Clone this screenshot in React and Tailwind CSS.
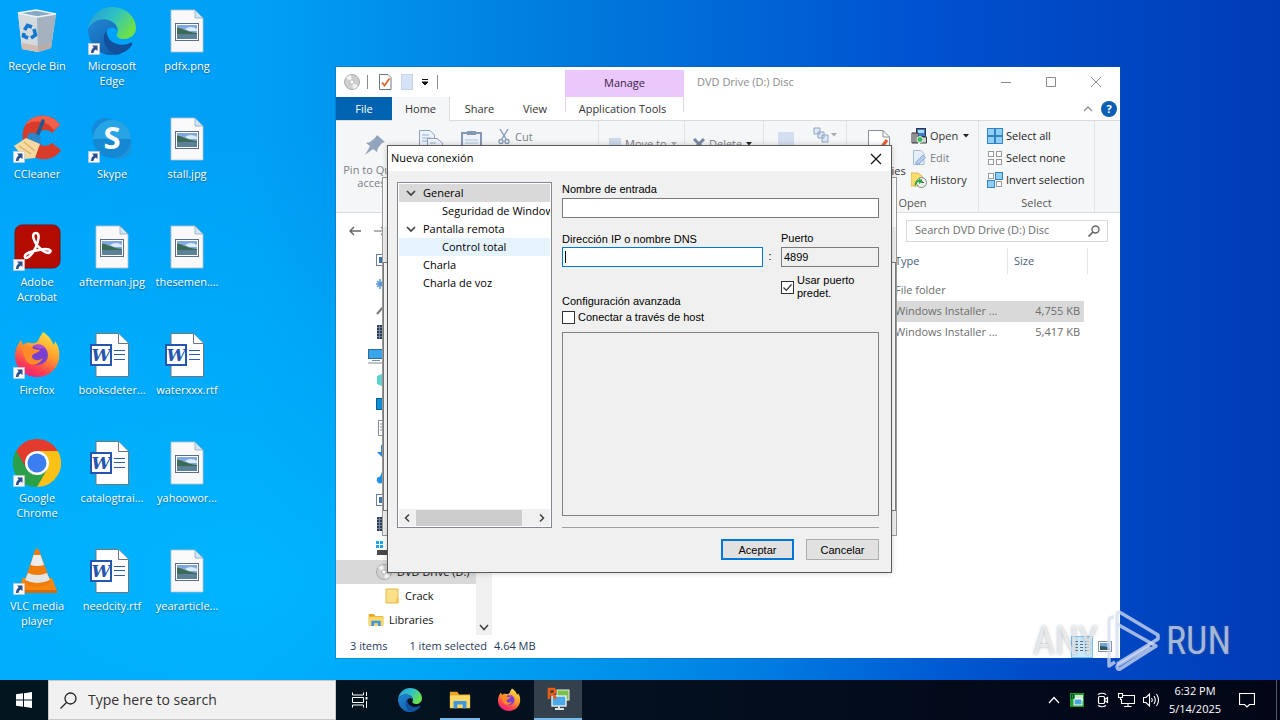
import { useState } from "react";

function ShortcutArrow() {
  return (
    <svg viewBox="0 0 12 12" className="absolute bottom-0 left-0 size-3">
      <rect x="0.5" y="0.5" width="11" height="11" fill="#f8f8fa" stroke="#c9ccd4" strokeWidth="0.6" />
      <path d="M4 2.500H9.500V8L7.800 6.400C6.300 7.300 5.600 8.400 5.400 10H3C3 7.600 4 5.700 5.700 4.300Z" fill="#2b4e8c" />
    </svg>
  );
}

function RecycleBin() {
  return (
    <svg viewBox="0 0 48 48" className="size-12">
      <path d="M5 6 23 3 43 7 38 41 25 45 9 42Z" fill="#cfd8df" />
      <path d="M5 6 24 10 25 45 9 42Z" fill="#d3dade" />
      <path d="M24 10 43 7 38 41 25 45Z" fill="#a3b2be" />
      <path d="M5 6 23 3 43 7 24 10Z" fill="#86a9c2" stroke="#eef3f5" strokeWidth="1.600" />
      <path d="M9 36 25 39 38.500 36 38 41 25 45 9 42Z" fill="#cfa995" opacity="0.6" />
      <g fill="none" stroke="#1677cf" strokeWidth="3.600">
        <path d="M11.500 23 14.500 18.500 19 20" />
        <path d="M21 22 22.500 28 18 31" />
        <path d="M15 31 10.500 29 11 26" />
      </g>
    </svg>
  );
}

function EdgeIcon({ className }) {
  return (
    <svg viewBox="0 0 48 48" className={className}>
      <defs>
        <linearGradient id="edgeTop" x1="0" y1="0" x2="1" y2="0.5">
          <stop offset="0" stopColor="#2596dd" />
          <stop offset="0.55" stopColor="#2fc2c4" />
          <stop offset="1" stopColor="#6be04c" />
        </linearGradient>
        <linearGradient id="edgeLow" x1="0" y1="0" x2="0.6" y2="1">
          <stop offset="0" stopColor="#2389d6" />
          <stop offset="1" stopColor="#1160ad" />
        </linearGradient>
      </defs>
      <path d="M0 22C2 9 12 0 24 0C38 0 48 10 48 21C48 28 42 32 36 32C31 32 28 30 29 27C31 24 30 18 24 15C16 11 5 13 0 22Z" fill="url(#edgeTop)" />
      <path d="M0 22C5 13 14 11 20 13C27 15 30 20 29 24C28 20 23 19 19 23C12 31 18 43 29 48C13 51 0 38 0 22Z" fill="url(#edgeLow)" />
      <path d="M19 23C12 31 17 44 29 48C35 46 41 43 44 38C45 36 44 35 42 36C34 40 23 37 20 30C19 27 18 25 19 23Z" fill="#124f9c" />
    </svg>
  );
}

function CCleanerIcon() {
  return (
    <svg viewBox="0 0 48 48" className="size-12">
      <path d="M47 10C42 2 33 0 26 1C14 3 8 13 10 25C12 38 23 46 34 44C40 43 45 40 48 35L39 28C34 33 25 31 24 24C23 16 33 12 39 18Z" fill="#d93b2b" />
      <path d="M47 10C42 2 33 0 26 1C20 2 15 5 12 10C22 4 34 6 41 15Z" fill="#f0604a" />
      <path d="M30 6 24 21" stroke="#23598f" strokeWidth="3.600" strokeLinecap="round" />
      <path d="M16 18Q23 17 28 23L27 30 13 25Z" fill="#2d86c8" />
      <path d="M13 23 27 29 22 43 12 44 1 31Z" fill="#f6d9a0" />
      <path d="M6 31 18 39M11 27 22 36" stroke="#dcb268" strokeWidth="1.400" />
    </svg>
  );
}

function SkypeIcon() {
  return (
    <svg viewBox="0 0 48 48" className="size-12">
      <circle cx="17" cy="16" r="13" fill="#1489d8" />
      <circle cx="31" cy="31" r="13" fill="#1a94dc" />
      <circle cx="24" cy="24" r="19" fill="#1488d2" />
      <path d="M5 24A19 19 0 0 1 43 24Z" fill="#27a4e6" />
      <text x="24" y="34" textAnchor="middle" fontSize="31" fontWeight="700" fontFamily="Open Sans, sans-serif" fill="#fff">S</text>
    </svg>
  );
}

function AcrobatIcon() {
  return (
    <svg viewBox="0 0 48 48" className="size-12">
      <rect x="2" y="2" width="45" height="43" rx="7" fill="#b30b00" stroke="#7b1512" />
      <path d="M23 10C27 10 26 18 22 26C18 33 13 37 12 34C11 31 18 28 26 27C35 25 39 27 37 29C34 32 26 26 22 19C19 13 20 10 23 10Z" fill="none" stroke="#fff" strokeWidth="2.600" />
    </svg>
  );
}

function FirefoxIcon({ className }) {
  return (
    <svg viewBox="0 0 48 48" className={className}>
      <defs>
        <linearGradient id="fox" x1="0.8" y1="0" x2="0.3" y2="1">
          <stop offset="0" stopColor="#ffe646" />
          <stop offset="0.45" stopColor="#ff9a2c" />
          <stop offset="0.8" stopColor="#ff3b55" />
          <stop offset="1" stopColor="#e32287" />
        </linearGradient>
      </defs>
      <path d="M30 1C36 5 40 10 40 14C42 12 42 10 42 10C46 16 47 21 46 28C44 39 35 46 24 46C12 46 2 37 2 25C2 18 5 13 8 9L10 14C13 11 16 11 18 12C22 13 25 11 26 8C27 5 29 3 30 1Z" fill="url(#fox)" />
      <circle cx="25" cy="24" r="10" fill="#7a3fd0" />
      <path d="M8 16C13 13 18 15 21 18L27 19C26 22 20 22 19 25C19 29 25 31 30 27C26 36 14 35 12 27Z" fill="#ff8a2a" />
      <path d="M20 15C24 12 31 13 34 19C31 17 29 17 27 18Z" fill="#b04fc9" />
    </svg>
  );
}

function ChromeIcon() {
  return (
    <svg viewBox="0 0 48 48" className="size-12">
      <path d="M24 24 3.200 12A24 24 0 0 1 44.800 12Z" fill="#e33b2e" />
      <path d="M24 24 44.800 12A24 24 0 0 1 24 48Z" fill="#fbc116" />
      <path d="M24 24 24 48A24 24 0 0 1 3.200 12Z" fill="#2aa04a" />
      <path d="M24 12H44.800L34.500 30Z" fill="#fbc116" />
      <path d="M13.600 30 3.200 12 24 12Z" fill="#e33b2e" />
      <path d="M3.200 12 13.600 30 24 36 34.400 30 24 48A24 24 0 0 1 3.200 12Z" fill="#2aa04a" />
      <circle cx="24" cy="24" r="12" fill="#fff" />
      <circle cx="24" cy="24" r="9.500" fill="#3c7df0" />
    </svg>
  );
}

function VlcIcon() {
  return (
    <svg viewBox="0 0 48 48" className="size-12">
      <path d="M10 31H39L44 44H4Z" fill="#f5870f" />
      <path d="M4 43H44V46H4Z" fill="#d96b06" />
      <path d="M22 3Q24 0 26 3L38 36Q24 44 11 36Z" fill="#f07c0c" />
      <path d="M20.500 8H27.500L31 18Q24 20 17.500 18Z" fill="#ececec" />
      <path d="M15 26Q24 30 34 26L37 33Q24 39 12 33Z" fill="#e4e4e4" />
    </svg>
  );
}

function ImageFileIcon() {
  return (
    <svg viewBox="0 0 48 48" className="size-12">
      <path d="M8 3H32L40 11V45H8Z" fill="#f9f9f9" stroke="#b9c2c9" strokeWidth="0.8" />
      <path d="M32 3V11H40Z" fill="#cfe6f8" stroke="#8fa9bd" strokeWidth="0.8" />
      <rect x="12.500" y="16.500" width="23" height="17" fill="#fff" stroke="#5c6f86" />
      <rect x="14" y="18" width="20" height="14" fill="#7fa9dd" />
      <path d="M14 21C18 20 22 25 34 26V28H14Z" fill="#3c6a52" />
      <rect x="14" y="27" width="20" height="5" fill="#5a8199" />
      <path d="M22 22Q28 18 34 22V24H26Z" fill="#dcebf8" />
    </svg>
  );
}

function WordFileIcon() {
  return (
    <svg viewBox="0 0 48 48" className="size-12">
      <path d="M8 2.500H30.500L40.500 12.500V45.500H8Z" fill="#fff" stroke="#70767d" />
      <path d="M30.500 2.500V12.500H40.500" fill="#fff" stroke="#70767d" />
      <path d="M26 19.500H37M26 23.500H37M26 28.500H37" stroke="#2a5db0" />
      <rect x="3" y="14" width="20" height="20" fill="#fff" stroke="#2456b0" strokeWidth="2" />
      <text x="13" y="30" textAnchor="middle" fontSize="17" fontWeight="700" fontStyle="italic" fontFamily="DejaVu Serif, serif" fill="#2456b0">W</text>
    </svg>
  );
}

const desktopItems = [
  { name: "Recycle Bin", icon: <RecycleBin /> },
  { name: "Microsoft Edge", icon: <EdgeIcon className="size-12" />, shortcut: true },
  { name: "pdfx.png", icon: <ImageFileIcon /> },
  { name: "CCleaner", icon: <CCleanerIcon />, shortcut: true },
  { name: "Skype", icon: <SkypeIcon />, shortcut: true },
  { name: "stall.jpg", icon: <ImageFileIcon /> },
  { name: "Adobe Acrobat", icon: <AcrobatIcon />, shortcut: true },
  { name: "afterman.jpg", icon: <ImageFileIcon /> },
  { name: "thesemen....", icon: <ImageFileIcon /> },
  { name: "Firefox", icon: <FirefoxIcon className="size-12" />, shortcut: true },
  { name: "booksdeter...", icon: <WordFileIcon /> },
  { name: "waterxxx.rtf", icon: <WordFileIcon /> },
  { name: "Google Chrome", icon: <ChromeIcon />, shortcut: true },
  { name: "catalogtrai...", icon: <WordFileIcon /> },
  { name: "yahoowor...", icon: <ImageFileIcon /> },
  { name: "VLC media player", icon: <VlcIcon />, shortcut: true },
  { name: "needcity.rtf", icon: <WordFileIcon /> },
  { name: "yeararticle...", icon: <ImageFileIcon /> },
];

function Desktop() {
  return (
    <div className="grid w-fit grid-cols-[repeat(3,75px)] auto-rows-[108px] pt-[7px]">
      {desktopItems.map((item) => (
        <button key={item.name} type="button" className="flex flex-col items-center pr-px text-[11px] leading-[15px] text-white">
          <span className="relative size-12">
            {item.icon}
            {item.shortcut && <ShortcutArrow />}
          </span>
          <span className="mt-[3px] w-[72px] text-center [text-shadow:0_1px_2px_rgba(0,0,0,0.45)]">{item.name}</span>
        </button>
      ))}
    </div>
  );
}

function Disc({ className }) {
  return (
    <svg viewBox="0 0 16 16" className={className}>
      <circle cx="8" cy="8" r="7.500" fill="#cfcfcf" stroke="#9c9c9c" strokeWidth="0.8" />
      <path d="M8 8 2 4A7 7 0 0 1 7 1ZM8 8 14 12A7 7 0 0 1 9 15Z" fill="#f3f3f3" />
      <circle cx="8" cy="8" r="2.200" fill="#fff" stroke="#a8a8a8" strokeWidth="0.8" />
    </svg>
  );
}

function FolderIcon({ className }) {
  return (
    <svg viewBox="0 0 24 20" className={className}>
      <path d="M1 1H9L11 4H23V18H1Z" fill="#e8a825" />
      <path d="M1 5H23V19H1Z" fill="#fbd768" />
      <path d="M5 19V11H19V19H15V15H9V19Z" fill="#3f97dd" />
    </svg>
  );
}

function CheckDoc({ className }) {
  return (
    <svg viewBox="0 0 16 18" className={className}>
      <path d="M2.500 1.500H11L14 4.500V16.500H2.500Z" fill="#fff" stroke="#6d7680" />
      <path d="M5 9.500 7.500 12.500 12.500 5.500" fill="none" stroke="#e0622b" strokeWidth="1.800" />
    </svg>
  );
}

// large version on the ribbon
function PropertiesIcon() {
  return (
    <svg viewBox="0 0 24 32" className="mt-1 h-8 w-6">
      <path d="M1.500 1.500H16L22.500 8V31H1.500Z" fill="#fff" stroke="#8a8f95" />
      <path d="M16 1.500V8H22.500" fill="none" stroke="#8a8f95" />
      <path d="M7 18 11 23 20 11" fill="none" stroke="#e0622b" strokeWidth="3" />
    </svg>
  );
}

function Caret({ className = "text-[#222]" }) {
  return (
    <svg viewBox="0 0 6 4" className={`h-1 w-1.5 ${className}`}>
      <path d="M0 0H6L3 3.500Z" fill="currentColor" />
    </svg>
  );
}

function ExplorerTitle() {
  return (
    <div className="flex h-[30px] shrink-0">
      <div className="flex w-[229px] items-center pl-2">
        <Disc className="size-4" />
        <span className="ml-[7px] h-3.5 w-px bg-[#8a8a8a]" />
        <CheckDoc className="ml-[9px] h-[18px] w-4" />
        <span className="ml-2 h-4 w-3 border border-[#c3d2ea] bg-[#d6e2f5]" />
        <svg viewBox="0 0 8 8" className="ml-2 size-2">
          <path d="M1 1.500H7M1 4H7L4 7Z" stroke="#111" fill="#111" />
        </svg>
        <span className="ml-2 h-3.5 w-px bg-[#8a8a8a]" />
      </div>
      <div className="mt-[3px] flex w-[119px] items-center justify-center bg-[#e9c8fb] text-[#3b2147]">Manage</div>
      <div className="flex-1 pt-[7px] pl-[13px] leading-4 text-[#8b8b8b]">DVD Drive (D:) Disc</div>
      <div className="flex items-center pr-px text-[#8a8a8a]">
        <button type="button" aria-label="Minimize" className="flex w-[45px] justify-center">
          <svg viewBox="0 0 12 12" className="size-3"><path d="M1 6.500H11" stroke="currentColor" /></svg>
        </button>
        <button type="button" aria-label="Maximize" className="flex w-[45px] justify-center">
          <svg viewBox="0 0 12 12" className="size-3"><path d="M1.500 1.500H10.500V10.500H1.500Z" fill="none" stroke="currentColor" /></svg>
        </button>
        <button type="button" aria-label="Close" className="flex w-[46px] justify-center">
          <svg viewBox="0 0 12 12" className="size-3"><path d="M1 1 11 11M11 1 1 11" stroke="currentColor" /></svg>
        </button>
      </div>
    </div>
  );
}

function RibbonTabs() {
  return (
    <div className="flex h-6 shrink-0 border-b border-[#dadbdc] text-[#333]">
      <button type="button" className="w-14 bg-[#0063b1] pt-0.5 text-white">File</button>
      <button type="button" className="-mb-px w-[58px] border-r border-[#dadbdc] bg-[#f5f6f7]">Home</button>
      <button type="button" className="w-[59px] pt-0.5">Share</button>
      <button type="button" className="mr-1 w-[52px] pt-0.5">View</button>
      <button type="button" className="mb-2 w-[119px] border-x border-[#e3d3ea] pr-1">
        <span className="block h-4 pt-1">Application Tools</span>
      </button>
      <div className="flex flex-1 items-center justify-end gap-2 pr-[3px]">
        <svg viewBox="0 0 10 6" className="h-1.5 w-2.5"><path d="M1 5 5 1 9 5" fill="none" stroke="#8d8d8d" strokeWidth="1.300" /></svg>
        <button type="button" aria-label="Help" className="size-4 rounded-full bg-[#0b5fb4] text-[11px] leading-4 font-bold text-white">?</button>
      </div>
    </div>
  );
}

function SelectIcon({ type }) {
  const on = { all: [1, 1, 1, 1], none: [0, 0, 0, 0], invert: [0, 1, 1, 0] }[type];
  const spots = [[1, 1], [9, 1], [1, 9], [9, 9]];
  return (
    <svg viewBox="0 0 16 16" className="size-4">
      {spots.map(([x, y], i) => (
        <rect
          key={i}
          x={on[i] ? x - 0.5 : x + 0.5}
          y={on[i] ? y - 0.5 : y + 0.5}
          width={on[i] ? 7 : 5}
          height={on[i] ? 7 : 5}
          fill={on[i] ? "#8fd0fa" : "#fff"}
          stroke={on[i] ? "#3583bd" : "#9a9a9a"}
        />
      ))}
    </svg>
  );
}

function OpenIcon() {
  return (
    <svg viewBox="0 0 16 16" className="size-4">
      <rect x="5.500" y="0.500" width="9" height="8" fill="#3f78c9" stroke="#2c3747" />
      <rect x="7" y="2" width="6" height="3" fill="#a6dcf5" />
      <path d="M11 9H15.500V15H9" fill="#cfd3d6" stroke="#3d3d3d" />
      <path d="M1 5H7V15H1Z" fill="#f0f0f0" stroke="#333" />
      <path d="M3 5V15M5 5V15" stroke="#333" />
      <circle cx="9" cy="11.500" r="3" fill="#3cba5d" stroke="#dff7df" />
    </svg>
  );
}

function EditIcon() {
  return (
    <svg viewBox="0 0 16 16" className="size-4">
      <path d="M2.500 0.500H10L13 3.500V14.500H2.500Z" fill="#e6eef9" stroke="#a8b9d2" />
      <path d="M5 12 12 5 14.500 7.500 8 14H5Z" fill="#b7cdec" stroke="#8eabd4" />
    </svg>
  );
}

function HistoryIcon() {
  return (
    <svg viewBox="0 0 16 16" className="size-4">
      <path d="M0 1H7L11 4V14H0Z" fill="#fbdc6c" stroke="#dcae3c" strokeWidth="0.8" />
      <circle cx="10.500" cy="10.500" r="5" fill="#e9f3e8" stroke="#7f8b86" />
      <path d="M10.500 7.500V10.500H13" fill="none" stroke="#4b5450" />
      <path d="M4 15C3 10 5 8 8 8L8 6 12 9.500 8 12V10C6 10 5 12 4 15Z" fill="#37a647" />
    </svg>
  );
}

function Ribbon() {
  return (
    <div className="flex h-[92px] shrink-0 border-b border-[#dadbdc] bg-[#f5f6f7] text-[#7b7f86]">
      <div className="flex w-[263px] items-start border-r border-[#e2e3e4] pt-2">
        <button type="button" className="ml-1.5 flex w-16 flex-col items-center leading-[13px]">
          <svg viewBox="0 0 24 24" className="mt-1 mb-1.5 size-6">
            <path d="M15 2 23 9 20 10 16 15 15 19 11 16 3 22 8 13 4 10 8 9 13 5Z" fill="#93a5bc" />
          </svg>
          <span>Pin to Quick access</span>
        </button>
        <svg viewBox="0 0 26 26" className="ml-3 size-[26px]">
          <path d="M1.500 1.500H12L16.500 6V20H1.500Z" fill="#eef3fa" stroke="#8fa0b5" />
          <path d="M4 6H11M4 9H13M4 12H13" stroke="#8fb0d8" />
          <path d="M9.500 9.500H19L24.500 14V26H9.500Z" fill="#eef3fa" stroke="#8fa0b5" />
          <path d="M12 14H18M12 17H22" stroke="#8fb0d8" />
        </svg>
        <svg viewBox="0 0 24 26" className="ml-4 h-[26px] w-6">
          <path d="M2 4H21V26H2Z" fill="#eef3fa" stroke="#8498b5" strokeWidth="2" />
          <path d="M7 2H16V6H7Z" fill="#8498b5" />
          <path d="M5 11H18M5 14H18M5 17H18" stroke="#b3c5dc" />
        </svg>
        <div className="ml-3.5 flex items-center gap-[5px]">
          <svg viewBox="0 0 12 16" className="h-4 w-3" fill="none" stroke="#869bb7" strokeWidth="1.400">
            <path d="M2 0 8 10M10 0 4 10" />
            <circle cx="3" cy="12.500" r="2" />
            <circle cx="9" cy="12.500" r="2" />
          </svg>
          <span className="leading-[14px]">Cut</span>
        </div>
      </div>
      <div className="flex w-[86px] items-start border-r border-[#e2e3e4] pt-[15px] pl-2.5">
        <div className="flex items-center gap-1">
          <span className="h-3 w-3 bg-[#ccd9ec]" />
          <span className="leading-4 whitespace-nowrap">Move to</span>
          <Caret className="text-[#aaa]" />
        </div>
      </div>
      <div className="flex w-[79px] items-start border-r border-[#e2e3e4] pt-[15px] pl-2">
        <div className="flex items-center gap-1">
          <svg viewBox="0 0 12 12" className="size-3"><path d="M1 1 11 11M11 1 1 11" stroke="#7689a3" strokeWidth="3" /></svg>
          <span className="leading-4">Delete</span>
          <Caret />
        </div>
      </div>
      <div className="flex w-[83px] items-start border-r border-[#e2e3e4] pt-1.5 pl-3.5">
        <span className="mt-[5px] h-6 w-4 bg-[#d3dff0]" />
        <svg viewBox="0 0 16 16" className="ml-[19px] size-4">
          <path d="M1 1H7V7H1ZM5 5H11V11H5ZM9 8H15V15H9Z" fill="#dfe9f6" stroke="#92a7c5" />
        </svg>
        <Caret className="mt-1.5 ml-0.5 text-[#aaa]" />
      </div>
      <div className="flex w-[132px] flex-col border-r border-[#e2e3e4] text-[#333]">
        <div className="flex pt-1">
          <div className="flex w-16 flex-col items-center">
            <PropertiesIcon />
            <span className="pt-0.5 leading-4">Properties</span>
          </div>
          <div className="flex flex-col">
            <button type="button" className="flex h-[22px] items-center gap-[3px]">
              <OpenIcon />Open<span className="ml-0.5"><Caret /></span>
            </button>
            <button type="button" className="flex h-[22px] items-center gap-[3px] text-[#7b7f86]"><EditIcon />Edit</button>
            <button type="button" className="flex h-[22px] items-center gap-[3px]"><HistoryIcon />History</button>
          </div>
        </div>
        <span className="pt-1 text-center leading-4 text-[#555]">Open</span>
      </div>
      <div className="flex w-[116px] flex-col border-r border-[#e2e3e4] pl-2 text-[#222]">
        <div className="flex flex-col pt-1">
          <button type="button" className="flex h-[22px] items-center gap-[3px]"><SelectIcon type="all" />Select all</button>
          <button type="button" className="flex h-[22px] items-center gap-[3px]"><SelectIcon type="none" />Select none</button>
          <button type="button" className="flex h-[22px] items-center gap-[3px] whitespace-nowrap"><SelectIcon type="invert" />Invert selection</button>
        </div>
        <span className="pt-1 pr-2 text-center leading-4 text-[#555]">Select</span>
      </div>
    </div>
  );
}

const treeGlyphs = {
  picture: (
    <g>
      <rect x="0.500" y="2.500" width="15" height="11" fill="#fff" stroke="#6b7f99" />
      <rect x="3" y="5" width="10" height="6" fill="#3d73a8" />
    </g>
  ),
  gear: <path d="M4 3V13M1 5 7 11M7 5 1 11M0 8H8" stroke="#5a9bd6" strokeWidth="1.600" />,
  tool: <path d="M1 14 8 6 12 2" stroke="#777" strokeWidth="2" fill="none" />,
  film: (
    <g>
      <rect x="1" y="1" width="14" height="14" fill="#6f86a6" />
      <path d="M2 1V15M5 1V15" stroke="#1d2430" strokeWidth="1.500" strokeDasharray="2 1" />
    </g>
  ),
  monitor: (
    <g>
      <rect x="0.500" y="1.500" width="15" height="9" fill="#39a5ea" stroke="#2c6d9e" />
      <path d="M4 12.500H12M0 15H16" stroke="#7d8b96" />
    </g>
  ),
  cube: <path d="M1 4 8 1 15 4V12L8 15 1 12Z" fill="#5fd0cd" />,
  desk: <rect x="0.500" y="2.500" width="15" height="11" fill="#0f8ed8" stroke="#0a5f96" />,
  doc: <path d="M2.500 0.500H13V15.500H2.500ZM4 4H11M4 7H11M4 10H11" fill="#fff" stroke="#7f8b96" />,
  down: <path d="M5 1H10V8H14L8 15 1 8H5Z" fill="#2a86d6" />,
  note: <path d="M7 1V11A3 3 0 1 1 4 9" fill="#1e90e6" stroke="#1e90e6" />,
  drive: (
    <g>
      <path d="M0 1H3V4H0ZM4 1H7V4H4ZM0 5H3V8H0ZM4 5H7V8H4Z" fill="#1ca6e8" />
      <rect x="1" y="10" width="15" height="5" fill="#4a4a4a" />
    </g>
  ),
};

const treeItems = ["picture", "gear", "tool", "film", "monitor", "cube", "desk", "doc", "down", "note", "picture", "film", "drive"];

function NavPane() {
  return (
    <div className="flex w-[156px] shrink-0 text-[#111]">
      <ul className="w-[140px] overflow-hidden leading-6">
        {treeItems.map((icon, i) => (
          <li key={i} className={`flex h-6 items-center ${icon === "monitor" ? "pl-8" : "pl-10"}`}>
            <svg viewBox="0 0 16 16" className="size-4 shrink-0">{treeGlyphs[icon]}</svg>
          </li>
        ))}
        <li className="flex h-6 items-center gap-[5px] bg-[#d9d9d9] pl-10 whitespace-nowrap">
          <Disc className="size-4" />DVD Drive (D:)
        </li>
        <li className="flex h-6 items-center gap-[5px] pl-12">
          <svg viewBox="0 0 16 16" className="size-4">
            <path d="M2 1H14V15H2Z" fill="#fbe08a" stroke="#e2b94d" />
            <path d="M13 9 15 11V15H11Z" fill="#f0c75c" />
          </svg>
          Crack
        </li>
        <li className="flex h-6 items-center gap-[5px] pl-8"><FolderIcon className="h-3.5 w-4" />Libraries</li>
      </ul>
      <div className="flex w-4 items-end justify-center bg-[#f0f0f0] pb-1">
        <svg viewBox="0 0 10 7" className="h-[7px] w-2.5"><path d="M1 1 5 5.500 9 1" fill="none" stroke="#444" strokeWidth="1.600" /></svg>
      </div>
    </div>
  );
}

const files = [
  ["File folder", ""],
  ["Windows Installer ...", "4,755 KB"],
  ["Windows Installer ...", "5,417 KB"],
];

function Explorer() {
  return (
    <section className="absolute top-[67px] left-[336px] flex h-[591px] w-[784px] flex-col bg-white text-[11px] text-[#333] shadow-[0_0_0_1px_rgba(20,90,160,0.35)]">
      <ExplorerTitle />
      <RibbonTabs />
      <Ribbon />
      <div className="flex h-[35px] shrink-0 items-center justify-between pr-3 pl-[13px]">
        <div className="flex gap-[13px]">
          <svg viewBox="0 0 12 10" className="h-2.5 w-3"><path d="M12 5H1M5 1 1 5 5 9" fill="none" stroke="#666" strokeWidth="1.500" /></svg>
          <svg viewBox="0 0 12 10" className="h-2.5 w-3"><path d="M0 5H11M7 1 11 5 7 9" fill="none" stroke="#999" strokeWidth="1.500" /></svg>
        </div>
        <label className="flex h-[22px] w-[202px] items-center border border-[#d9d9d9] pr-[7px] pl-2">
          <input aria-label="Search" placeholder="Search DVD Drive (D:) Disc" className="w-full min-w-0 flex-1 outline-none placeholder:text-[#6d6d6d]" />
          <svg viewBox="0 0 12 12" className="size-3"><circle cx="7.500" cy="4.500" r="3.500" fill="none" stroke="#666" strokeWidth="1.400" /><path d="M5 7 0.500 11.500" stroke="#666" strokeWidth="1.700" /></svg>
        </label>
      </div>
      <div className="flex min-h-0 flex-1 overflow-hidden">
        <NavPane />
        <div className="flex-1">
          <table className="table-fixed border-separate border-spacing-0 text-left text-[#6d6d6d]">
            <colgroup>
              <col className="w-[400px]" />
              <col className="w-[116px]" />
              <col className="w-[76px]" />
              <col className="w-1" />
            </colgroup>
            <thead>
              <tr className="h-[26px] text-[#4c607a]">
                <th aria-label="Name" />
                <th className="border-r border-[#e5e5e5] pl-[3px] font-normal">Type</th>
                <th colSpan={2} className="border-r border-[#e5e5e5] pl-1.5 font-normal">Size</th>
              </tr>
            </thead>
            <tbody>
              <tr className="h-1.5"><td colSpan={4} /></tr>
              {files.map(([type, size], i) => (
                <tr key={i} className="h-[21px]">
                  <td className={i === 1 ? "bg-[#d9d9d9]" : ""} />
                  <td className={i === 1 ? "bg-[#d9d9d9] pl-[3px] whitespace-nowrap" : "pl-[3px] whitespace-nowrap"}>{type}</td>
                  <td className={i === 1 ? "bg-[#d9d9d9] pr-1 text-right" : "pr-1 text-right"}>{size}</td>
                  <td />
                </tr>
              ))}
            </tbody>
          </table>
        </div>
      </div>
      <div className="flex h-[23px] shrink-0 items-center pr-[7px] pl-3.5 text-[#1e395b]">
        <span>3 items</span>
        <span className="ml-[22px]">1 item selected</span>
        <span className="ml-[7px] flex-1">4.64 MB</span>
        <span className="flex h-[22px] w-[22px] items-center justify-center border border-[#7fc4e8] bg-[#cbe9f8]">
          <svg viewBox="0 0 16 14" className="h-3.5 w-4"><path d="M1 1.500H4M1 4.500H4M1 7.500H4M1 10.500H4M6 1.500H9M6 4.500H9M6 7.500H9M6 10.500H9M11 1.500H15M11 4.500H15M11 7.500H15M11 10.500H15" stroke="#5d6b78" /></svg>
        </span>
        <svg viewBox="0 0 16 14" className="ml-1 h-3.5 w-4"><rect x="1.500" y="1.500" width="13" height="10" fill="#fff" stroke="#8a949e" /><path d="M3 3H13V10H3Z" fill="#6fa5d8" /><path d="M3 6Q8 6 13 8V10H3Z" fill="#2f5a63" /></svg>
      </div>
    </section>
  );
}

// connection list window, only its edges show round the dialog
function ViewerWindow() {
  return (
    <section className="absolute top-[177px] left-[382px] flex h-[359px] w-[515px] flex-col border border-[#9a9a9a] bg-white">
      <div className="h-[49px]" />
      <div className="h-[35px] bg-[#f0f0f0]" />
      <div className="flex-1 border border-[#7d7d7d] bg-white" />
      <div className="h-6 bg-[#f0f0f0]" />
    </section>
  );
}

const sections = [
  { name: "General", open: true, row: "bg-[#d9d9d9]" },
  { name: "Seguridad de Windows", child: true },
  { name: "Pantalla remota", open: true },
  { name: "Control total", child: true, row: "bg-[#e5f3ff]" },
  { name: "Charla" },
  { name: "Charla de voz" },
];

function SectionTree() {
  return (
    <div className="flex w-[155px] flex-col border border-[#828790] bg-white p-px text-[11px]">
      <ul className="flex-1 overflow-hidden">
        {sections.map((s) => (
          <li key={s.name} className={`flex h-[18px] items-center whitespace-nowrap ${s.row || ""} ${s.child ? "pl-[43px]" : "pl-[7px]"}`}>
            {!s.child && (
              <span className="w-[17px]">
                {s.open && (
                  <svg viewBox="0 0 10 7" className="h-[7px] w-2.5"><path d="M1 1 5 5 9 1" fill="none" stroke="#404040" strokeWidth="1.700" /></svg>
                )}
              </span>
            )}
            {s.name}
          </li>
        ))}
      </ul>
      <div className="flex h-[17px] items-center bg-[#f0f0f0]">
        <span className="flex w-[17px] justify-center">
          <svg viewBox="0 0 7 10" className="h-2.5 w-[7px]"><path d="M5 1.500 1.500 5 5 8.500" fill="none" stroke="#404040" strokeWidth="1.500" /></svg>
        </span>
        <span className="h-4 w-[106px] bg-[#cdcdcd]" />
        <span className="flex flex-1 justify-end pr-[5px]">
          <svg viewBox="0 0 7 10" className="h-2.5 w-[7px]"><path d="M2 1.500 5.500 5 2 8.500" fill="none" stroke="#404040" strokeWidth="1.500" /></svg>
        </span>
      </div>
    </div>
  );
}

function Checkbox({ id, checked, onChange }) {
  return (
    <span className="relative size-[13px] shrink-0">
      <input
        id={id}
        type="checkbox"
        checked={checked}
        onChange={(e) => onChange(e.target.checked)}
        className="block size-[13px] appearance-none border border-[#333] bg-white"
      />
      {checked && (
        <svg viewBox="0 0 13 13" className="pointer-events-none absolute inset-0 size-[13px]">
          <path d="M2.500 6.500 5.300 9.300 10.500 3.500" fill="none" stroke="#333" strokeWidth="1.200" />
        </svg>
      )}
    </span>
  );
}

function ConnectionDialog() {
  const [name, setName] = useState("");
  const [address, setAddress] = useState("");
  const [port, setPort] = useState("4899");
  const [defaultPort, setDefaultPort] = useState(true);
  const [viaHost, setViaHost] = useState(false);

  return (
    <section className="absolute top-[145px] left-[387px] flex h-[428px] w-[505px] flex-col border border-[#5a5a5a] bg-[#f0f0f0] text-black shadow-[0_0_6px_rgba(0,0,0,0.2)]">
      <header className="flex h-[25px] items-center justify-between bg-white pr-[9px] pl-[3px] text-[11px]">
        <h1>Nueva conexión</h1>
        <button type="button" aria-label="Cerrar">
          <svg viewBox="0 0 12 12" className="size-3"><path d="M1 1 11 11M11 1 1 11" stroke="#111" strokeWidth="1.200" /></svg>
        </button>
      </header>
      <form className="flex flex-1 flex-col px-3 pt-[11px] pb-3 pl-[9px] font-['Liberation_Sans',sans-serif] text-[11px] leading-[14px]">
        <div className="flex flex-1 gap-2.5">
          <div className="flex font-['Open_Sans',sans-serif]">
            <SectionTree />
          </div>
          <div className="flex flex-1 flex-col border-b border-[#9f9f9f]">
            <label htmlFor="name" className="mb-0.5">Nombre de entrada</label>
            <input id="name" value={name} onChange={(e) => setName(e.target.value)} className="h-5 border border-[#7a7a7a] bg-white px-0.5 outline-none" />
            <div className="mt-[13px] flex">
              <div className="flex flex-1 flex-col">
                <label htmlFor="address" className="mt-px mb-px">Dirección IP o nombre DNS</label>
                <div className="relative flex">
                  <input id="address" value={address} onChange={(e) => setAddress(e.target.value)} className="h-5 w-full border border-[#0078d7] bg-white px-0.5 outline-none" />
                  <span className="absolute top-1 left-[3px] h-3 w-px bg-black" />
                </div>
                <span className="mt-[27px]">Configuración avanzada</span>
                <div className="mt-0.5 flex items-center gap-[3px]">
                  <Checkbox id="viaHost" checked={viaHost} onChange={setViaHost} />
                  <label htmlFor="viaHost">Conectar a través de host</label>
                </div>
              </div>
              <span className="w-[18px] pt-[18px] pr-1 text-center">:</span>
              <div className="flex w-[98px] flex-col">
                <label htmlFor="port" className="mb-0.5">Puerto</label>
                <input id="port" value={port} readOnly={defaultPort} onChange={(e) => setPort(e.target.value)} className="h-5 w-full border border-[#7a7a7a] bg-[#f0f0f0] px-0.5 outline-none" />
                <div className="mt-[7px] flex items-center gap-[3px]">
                  <Checkbox id="defaultPort" checked={defaultPort} onChange={setDefaultPort} />
                  <label htmlFor="defaultPort" className="leading-[13px]">Usar puerto predet.</label>
                </div>
              </div>
            </div>
            <div className="mt-2 mb-[11px] flex-1 border border-[#828282]" />
          </div>
        </div>
        <div className="mt-[11px] flex justify-end gap-3">
          <button type="button" className="h-[21px] w-[73px] border-2 border-[#0078d7] bg-[#e1e1e1]">Aceptar</button>
          <button type="button" className="h-[21px] w-[73px] border border-[#adadad] bg-[#e1e1e1]">Cancelar</button>
        </div>
      </form>
    </section>
  );
}

function Watermark() {
  return (
    <div className="pointer-events-none absolute top-[610px] right-[49px] flex items-center font-['Liberation_Sans_Narrow','Roboto_Condensed','Liberation_Sans',sans-serif] text-[38px] leading-[62px] text-white/60 [text-shadow:0_0_3px_rgba(90,100,120,0.5)]">
      <span>ANY</span>
      <svg viewBox="0 0 56 62" className="mr-1 ml-2 h-[62px] w-14" fill="none" stroke="#d5def0" strokeOpacity="0.75" strokeWidth="3.500" strokeLinejoin="round">
        <path d="M11 48V4Q12 1 15 3L52 25V29L11 54" />
        <path d="M11 14 50 36 14 59Q11 60 11 56L44 36" />
        <path d="M8 7Q3 7 3 11V56L9 52" />
      </svg>
      <span>RUN</span>
    </div>
  );
}

function ViewerAppIcon({ className }) {
  return (
    <svg viewBox="0 0 24 24" className={className}>
      <rect x="11" y="3" width="12" height="10" fill="#7bbf4b" stroke="#e7efe2" />
      <rect x="6" y="9" width="14" height="10" fill="#49a9ea" stroke="#e8eff4" strokeWidth="1.400" />
      <path d="M9 22H18M13 19V22" stroke="#e0e0e0" strokeWidth="2" />
      <path d="M3 12V2H8Q11 5 7 7L10 12M3 7H7" fill="none" stroke="#ee5a12" strokeWidth="2.600" />
    </svg>
  );
}

function Taskbar() {
  return (
    <footer className="relative flex h-10 shrink-0 bg-linear-to-r from-[#03161f] via-[#04101f] to-[#020617] text-white">
      <button type="button" aria-label="Start" className="flex w-12 items-center justify-center">
        <svg viewBox="0 0 16 16" className="size-4"><path d="M0 2.300 7 1.300V7.500H0ZM8 1.200 16 0V7.500H8ZM0 8.500H7V14.700L0 13.700ZM8 8.500H16V16L8 14.800Z" fill="#fff" /></svg>
      </button>
      <label className="flex w-72 items-center gap-[11px] border border-[#c8c8c8] bg-[#f1f1f1] pl-[11px]">
        <svg viewBox="0 0 17 17" className="size-[17px]" fill="none" stroke="#222" strokeWidth="1.300"><circle cx="10.500" cy="6.500" r="5.500" /><path d="M6.500 10.500 0.500 16.500" /></svg>
        <input aria-label="Search" placeholder="Type here to search" className="min-w-0 flex-1 text-sm outline-none placeholder:text-[#333]" />
      </label>
      <button type="button" aria-label="Task View" className="flex w-12 items-center justify-center">
        <svg viewBox="0 0 16 16" className="size-4" fill="none" stroke="#fff"><path d="M0.500 0.500V3H11.500V0.500M0.500 15.500V13H11.500V15.500M0.500 5.500H11.500V10.500H0.500ZM14.500 0V4M14.500 9V16" /><path d="M13.500 5H15.500V7.500H13.500Z" fill="#fff" stroke="none" /></svg>
      </button>
      <button type="button" aria-label="Microsoft Edge" className="flex w-[52px] items-center justify-center"><EdgeIcon className="size-6" /></button>
      <button type="button" aria-label="File Explorer" className="flex w-12 items-center justify-center"><FolderIcon className="h-5 w-[22px]" /></button>
      <button type="button" aria-label="Firefox" className="flex w-[50px] items-center justify-center"><FirefoxIcon className="size-6" /></button>
      <button type="button" aria-label="Viewer" className="flex w-12 items-center justify-center border-b-2 border-[#76b9ed] bg-[#33414d]"><ViewerAppIcon className="size-6" /></button>
      <span className="absolute bottom-0 left-[440px] h-0.5 w-10 bg-[#76b9ed]" />
      <div className="flex flex-1 items-center justify-end">
        <svg viewBox="0 0 12 8" className="h-2 w-3"><path d="M1 7 6 1.500 11 7" fill="none" stroke="#fff" strokeWidth="1.300" /></svg>
        <svg viewBox="0 0 14 14" className="ml-2.5 size-3.5"><rect x="0" y="0" width="14" height="14" fill="#199c2e" /><rect x="5" y="2" width="8" height="6" fill="#cfe9cf" /><rect x="4" y="6" width="8" height="6" fill="#4aa6d8" stroke="#fff" /><path d="M1.500 6V1.500H3.500V6" stroke="#043" fill="none" /></svg>
        <svg viewBox="0 0 14 16" className="ml-3 h-4 w-3.5" fill="none" stroke="#fff" strokeWidth="1.200"><path d="M2 2.500Q6 0 10 2.500M2 13.500Q6 16 10 13.500" /><rect x="2.500" y="4.500" width="6" height="7" rx="1" /><path d="M8.500 7.500 11.500 5.500V10.500L8.500 8.500" /></svg>
        <svg viewBox="0 0 17 16" className="ml-2 h-4 w-[17px]" fill="none" stroke="#fff" strokeWidth="1.100"><path d="M5 3.500H16.500V11.500H3.500V7M10 11.500V14.500M6 14.500H13.500M0.500 1.500H4.500V5.500H0.500ZM2.500 5.500V8" /></svg>
        <svg viewBox="0 0 17 14" className="ml-2 h-3.5 w-[17px]" fill="none" stroke="#fff" strokeWidth="1.100"><path d="M0.500 4.500H3L6.500 1V13L3 9.500H0.500ZM8.500 5Q10 7 8.500 9M11 3Q13.500 7 11 11M13.500 1Q17.500 7 13.500 13" /></svg>
        <div className="ml-2 w-[54px] text-center text-[11px] leading-[18px]">
          <div>6:32 PM</div>
          <div>5/14/2025</div>
        </div>
        <svg viewBox="0 0 16 16" className="ml-[17px] size-4"><path d="M0.500 1.500H15.500V12.500H10.500L8 15 5.500 12.500H0.500Z" fill="none" stroke="#fff" strokeWidth="1.200" /></svg>
        <span className="mr-[3px] ml-[21px] h-10 w-px bg-[#4b5563]" />
      </div>
    </footer>
  );
}

export default function App() {
  return (
    <div className="flex h-screen flex-col overflow-hidden font-['Open_Sans','Noto_Sans',sans-serif]">
      <main className="relative min-h-0 flex-1 bg-[linear-gradient(to_right,#00a4fa_0%,#00a0f6_20%,#0078dc_46%,#0052d0_72%,#003cb6_100%)]">
        <div className="absolute inset-0 bg-[radial-gradient(ellipse_at_20%_85%,rgba(0,184,255,0.85),transparent_55%)]" />
        <div className="relative">
          <Desktop />
        </div>
        <Explorer />
        <ViewerWindow />
        <ConnectionDialog />
        <Watermark />
      </main>
      <Taskbar />
    </div>
  );
}
